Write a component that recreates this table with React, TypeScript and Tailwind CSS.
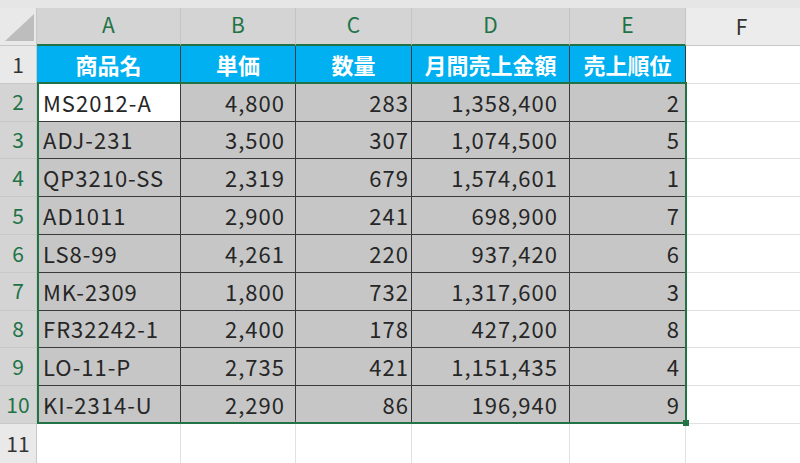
import React from "react";

const rows: string[][] = [
  ["MS2012-A", "4,800", "283", "1,358,400", "2"],
  ["ADJ-231", "3,500", "307", "1,074,500", "5"],
  ["QP3210-SS", "2,319", "679", "1,574,601", "1"],
  ["AD1011", "2,900", "241", "698,900", "7"],
  ["LS8-99", "4,261", "220", "937,420", "6"],
  ["MK-2309", "1,800", "732", "1,317,600", "3"],
  ["FR32242-1", "2,400", "178", "427,200", "8"],
  ["LO-11-P", "2,735", "421", "1,151,435", "4"],
  ["KI-2314-U", "2,290", "86", "196,940", "9"],
];

const font = { fontFamily: '"Noto Sans CJK JP", "Noto Sans", sans-serif' };

function RowHead({ n, sel }: { n: number; sel: boolean }) {
  return (
    <div
      className={
        "w-[37px] shrink-0 h-full flex items-center justify-center border-r border-b border-[#c8c8c8] text-[21px] " +
        (sel ? "bg-[#d4d4d4] text-[#217346]" : "bg-[#e9e9e9] text-[#333333]")
      }
    >
      {n}
    </div>
  );
}

export default function App() {
  return (
    <div className="w-[800px] h-[463px] overflow-hidden bg-white relative" style={font}>
      <div className="h-[8px] bg-[#e6e6e6]" />
      {/* column headers */}
      <div className="h-[38px] flex">
        <div className="w-[37px] shrink-0 bg-[#e9e9e9] border-r border-b border-[#c8c8c8] relative">
          <svg className="absolute left-0 top-0" width="37" height="37" viewBox="0 0 37 37">
            <polygon points="5,33 34,33 34,6" fill="#bdbdbd" />
          </svg>
        </div>
        {[
          ["A", "w-[144px]"],
          ["B", "w-[115px]"],
          ["C", "w-[116px]"],
          ["D", "w-[158px]"],
          ["E", "w-[116px]"],
        ].map(([l, w]) => (
          <div
            key={l}
            className={
              w +
              " shrink-0 bg-[#d4d4d4] border-r border-r-[#c4c4c4] border-b-2 border-b-[#217346] flex items-center justify-center text-[21px] text-[#217346] pb-[2px]"
            }
          >
            {l}
          </div>
        ))}
        <div className="flex-1 bg-[#ececec] border-b border-[#c8c8c8] flex items-center justify-center text-[21px] text-[#333333] pr-[3px]">
          F
        </div>
      </div>
      {/* row 1 */}
      <div className="h-[37.8px] flex">
        <RowHead n={1} sel={false} />
        {[
          ["商品名", "w-[144px]"],
          ["単価", "w-[115px]"],
          ["数量", "w-[116px]"],
          ["月間売上金額", "w-[158px]"],
          ["売上順位", "w-[116px]"],
        ].map(([t, w]) => (
          <div
            key={t}
            className={
              w +
              " shrink-0 bg-[#00b0f0] border-r border-b border-[#2f3f3f] flex items-center justify-center text-white font-bold text-[22px]"
            }
          >
            {t}
          </div>
        ))}
        <div className="flex-1 border-b border-[#e1e1e1]" />
      </div>
      {/* data rows */}
      {rows.map((r, i) => (
        <div key={i} className="h-[37.8px] flex">
          <RowHead n={i + 2} sel={true} />
          <div
            className={
              "w-[144px] shrink-0 border-r border-b border-[#3a3a3a] flex items-center pl-[6px] text-[22px] text-[#262626] tracking-[1px] " +
              (i === 0 ? "bg-white" : "bg-[#c6c6c6]")
            }
          >
            {r[0]}
          </div>
          <div className="w-[115px] shrink-0 bg-[#c6c6c6] border-r border-b border-[#3a3a3a] flex items-center justify-end pr-[10px] text-[22px] text-[#262626] tracking-[1px]">
            {r[1]}
          </div>
          <div className="w-[116px] shrink-0 bg-[#c6c6c6] border-r border-b border-[#3a3a3a] flex items-center justify-end pr-[2px] text-[22px] text-[#262626] tracking-[1px]">
            {r[2]}
          </div>
          <div className="w-[158px] shrink-0 bg-[#c6c6c6] border-r border-b border-[#3a3a3a] flex items-center justify-end pr-[11px] text-[22px] text-[#262626] tracking-[1px]">
            {r[3]}
          </div>
          <div className="w-[116px] shrink-0 bg-[#c6c6c6] border-r border-b border-[#3a3a3a] flex items-center justify-end pr-[5px] text-[22px] text-[#262626] tracking-[1px]">
            {r[4]}
          </div>
          <div className="flex-1 border-b border-[#e1e1e1]" />
        </div>
      ))}
      {/* row 11 */}
      <div className="h-[40px] flex">
        <RowHead n={11} sel={false} />
        <div className="w-[144px] shrink-0 border-r border-[#e1e1e1]" />
        <div className="w-[115px] shrink-0 border-r border-[#e1e1e1]" />
        <div className="w-[116px] shrink-0 border-r border-[#e1e1e1]" />
        <div className="w-[158px] shrink-0 border-r border-[#e1e1e1]" />
        <div className="w-[116px] shrink-0 border-r border-[#e1e1e1]" />
        <div className="flex-1" />
      </div>
      {/* selection overlay */}
      <div className="absolute left-[37px] top-[82px] w-[650px] h-[342px] border-2 border-[#217346] pointer-events-none" />
      <div className="absolute left-[683px] top-[420px] w-[6px] h-[6px] bg-[#217346] pointer-events-none" />
    </div>
  );
}
